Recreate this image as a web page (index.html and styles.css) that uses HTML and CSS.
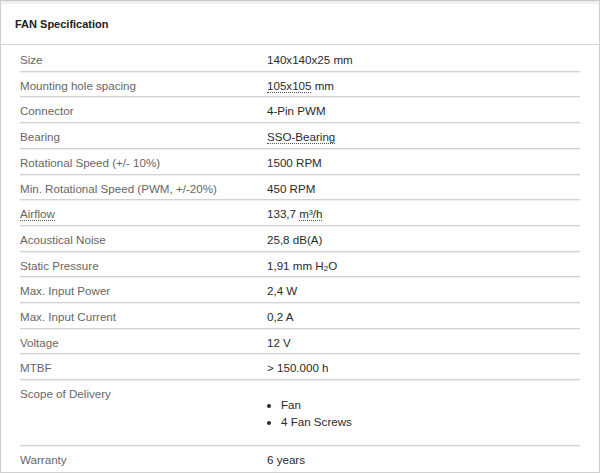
FILE: index.html
```html
<!DOCTYPE html>
<html>
<head>
<meta charset="utf-8">
<link rel="stylesheet" href="styles.css">
</head>
<body>
<div class="box">
  <div class="head">FAN Specification</div>
  <div class="spec">
    <div class="row"><div class="lbl">Size</div><div class="val">140x140x25 mm</div></div>
    <div class="row"><div class="lbl">Mounting hole spacing</div><div class="val"><abbr class="dot">105x105</abbr> mm</div></div>
    <div class="row"><div class="lbl">Connector</div><div class="val">4-Pin PWM</div></div>
    <div class="row"><div class="lbl">Bearing</div><div class="val"><abbr class="dot">SSO-Bearing</abbr></div></div>
    <div class="row"><div class="lbl">Rotational Speed (+/- 10%)</div><div class="val">1500 RPM</div></div>
    <div class="row"><div class="lbl">Min. Rotational Speed (PWM, +/-20%)</div><div class="val">450 RPM</div></div>
    <div class="row"><div class="lbl"><abbr class="dot">Airflow</abbr></div><div class="val">133,7 <abbr class="dot">m³/h</abbr></div></div>
    <div class="row"><div class="lbl">Acoustical Noise</div><div class="val">25,8 dB(A)</div></div>
    <div class="row"><div class="lbl">Static Pressure</div><div class="val">1,91 mm H<sub class="sub">2</sub>O</div></div>
    <div class="row"><div class="lbl">Max. Input Power</div><div class="val">2,4 W</div></div>
    <div class="row"><div class="lbl">Max. Input Current</div><div class="val">0,2 A</div></div>
    <div class="row"><div class="lbl">Voltage</div><div class="val">12 V</div></div>
    <div class="row"><div class="lbl">MTBF</div><div class="val">&gt; 150.000 h</div></div>
    <div class="row"><div class="lbl">Scope of Delivery</div><div class="val"><ul class="list"><li>Fan</li><li>4 Fan Screws</li></ul></div></div>
    <div class="row last"><div class="lbl">Warranty</div><div class="val">6 years</div></div>
  </div>
</div>
</body>
</html>
```
FILE: styles.css
```css
html, body {
  margin: 0;
  padding: 0;
  background: #fff;
}
body {
  font-family: "Liberation Sans", Arial, sans-serif;
  font-size: 11.6px;
}
.box {
  box-sizing: border-box;
  width: 600px;
  height: 473px;
  border: 1px solid #cfcfcf;
  border-top-color: #c8c8c8;
  overflow: hidden;
}
.head {
  border-top: 3px solid #efefef;
  height: 44px;
  box-sizing: border-box;
  padding-left: 14px;
  line-height: 40px;
  font-size: 11px;
  font-weight: bold;
  color: #222;
  border-bottom: 1px solid #d4d4d4;
}
.spec {
  margin: 1px 19px 0 19px;
}
.row {
  display: grid;
  grid-template-columns: 247px 1fr;
  padding: 7px 0 4px 0;
  line-height: 13.7px;
  border-bottom: 1px solid #d2d2d2;
  box-shadow: 0 1px 0 #efefef;
}
.row.last {
  border-bottom: none;
  box-shadow: none;
}
.lbl {
  color: #666;
}
.val {
  color: #2a2a2a;
}
.dot {
  text-decoration: none;
  border-bottom: 1px dotted #555;
}
.sub {
  font-size: 8px;
  vertical-align: -1px;
  line-height: 0;
}
.list {
  margin: 9.7px 0 10.6px 0;
  padding: 0 0 0 14px;
  line-height: 16.7px;
}
```
